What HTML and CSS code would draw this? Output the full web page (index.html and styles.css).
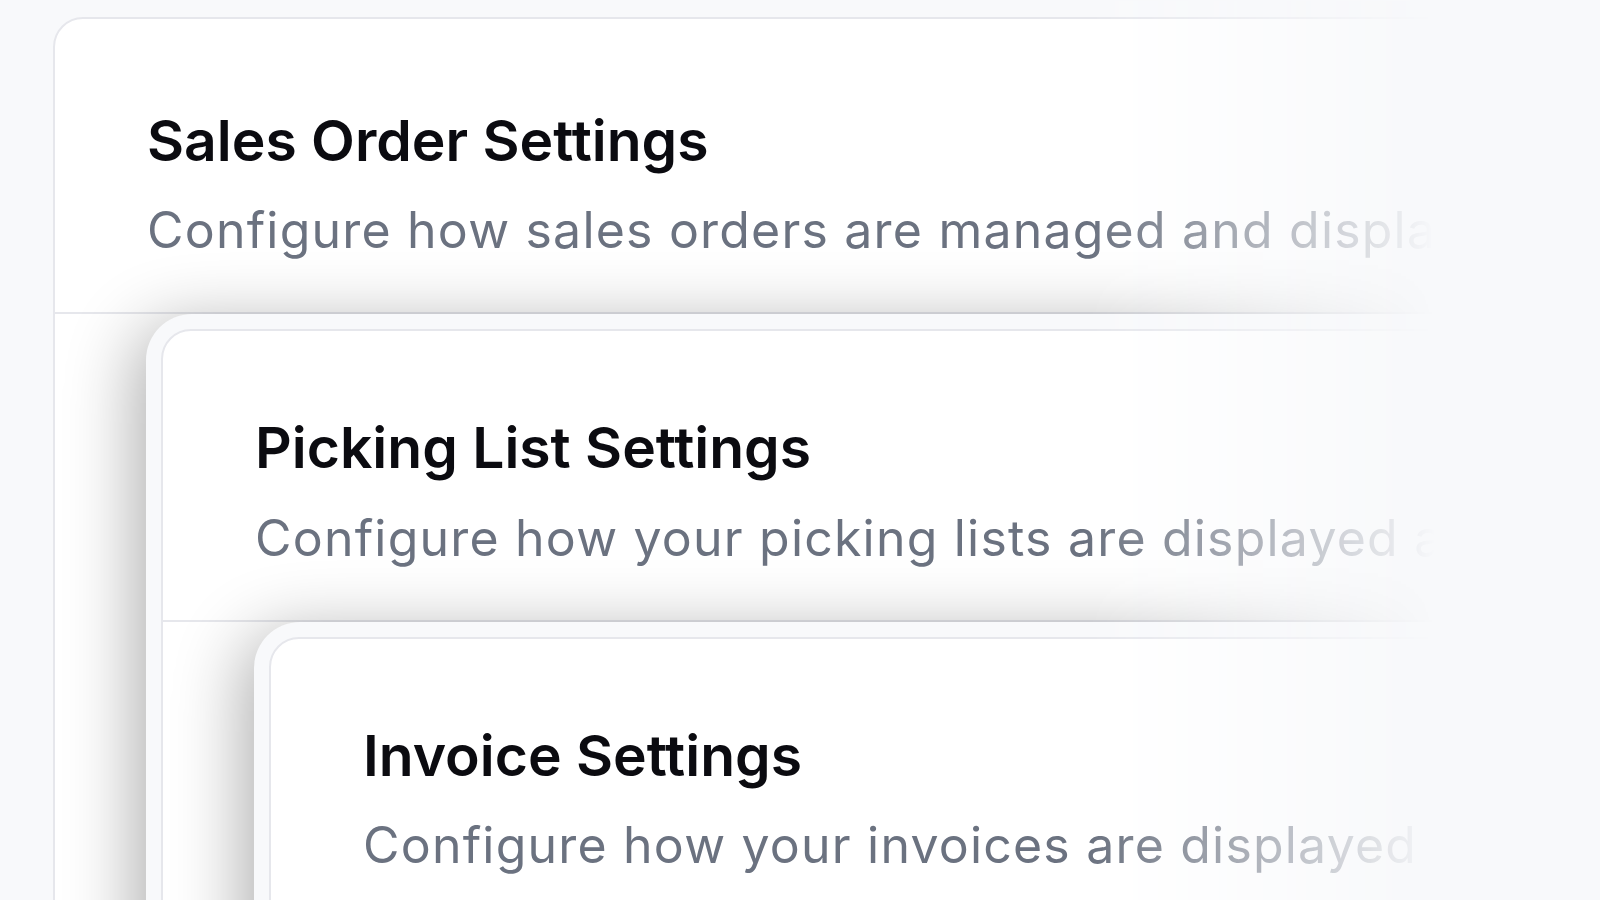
FILE: index.html
```html
<!DOCTYPE html>
<html lang="en">
<head>
  <meta charset="UTF-8" />
  <meta name="viewport" content="width=device-width, initial-scale=1.0"/>
  <title>Settings</title>
  <link rel="stylesheet" href="styles.css">
</head>
<body>

  <div class="scene">
    <div class="panel panel-root">
      <div class="panel-card">
        <div class="panel-head">
          <h2>Sales Order Settings</h2>
          <p>Configure how sales orders are managed and displayed in your workspace.</p>
        </div>
        <div class="panel-body">

          <div class="panel">
            <div class="panel-card">
              <div class="panel-head">
                <h2>Picking List Settings</h2>
                <p>Configure how your picking lists are displayed and printed.</p>
              </div>
              <div class="panel-body">

                <div class="panel">
                  <div class="panel-card">
                    <div class="panel-head">
                      <h2>Invoice Settings</h2>
                      <p>Configure how your invoices are displayed and sent.</p>
                    </div>
                    <div class="panel-body"></div>
                  </div>
                </div>

              </div>
            </div>
          </div>

        </div>
      </div>
    </div>
  </div>

</body>
</html>
```

FILE: styles.css
```css
body {
  font-family: Inter, 'Noto Sans', sans-serif;
  background: #f8f9fb;
  margin: 0;
  height: 100vh;
  overflow: hidden;
}

.scene {
  width: 1600px;
  height: 900px;
  padding: 1px 0 0 38px;
  box-sizing: border-box;
  overflow: hidden;
  -webkit-mask-image: linear-gradient(to right, #000 1090px, transparent 1435px);
  mask-image: linear-gradient(to right, #000 1090px, transparent 1435px);
}

.panel {
  background: #f8f9fb;
  padding: 15px;
  border-radius: 46px;
}

.panel-root {
  width: 1700px;
  padding-top: 16px;
}

.panel .panel {
  box-shadow: -10px 12px 70px rgba(0, 0, 0, 0.32);
}

.panel-card {
  background: #fff;
  border: 2px solid #e6e7ec;
  border-radius: 30px;
  min-height: 1200px;
}

.panel-head {
  padding: 83px 90px 49px 92px;
  border-bottom: 2px solid #e6e7ec;
}

.panel-root > .panel-card > .panel-head {
  padding-top: 88px;
}

.panel-head h2 {
  margin: 0;
  font-size: 57px;
  line-height: 1.2;
  font-weight: 600;
  color: #0b0b10;
}

.panel-head p {
  margin: 22px 0 0;
  font-size: 50px;
  line-height: 66px;
  letter-spacing: 1.2px;
  color: #6b7280;
  white-space: nowrap;
  overflow: hidden;
}

.panel-body {
  padding-left: 91px;
}
```
